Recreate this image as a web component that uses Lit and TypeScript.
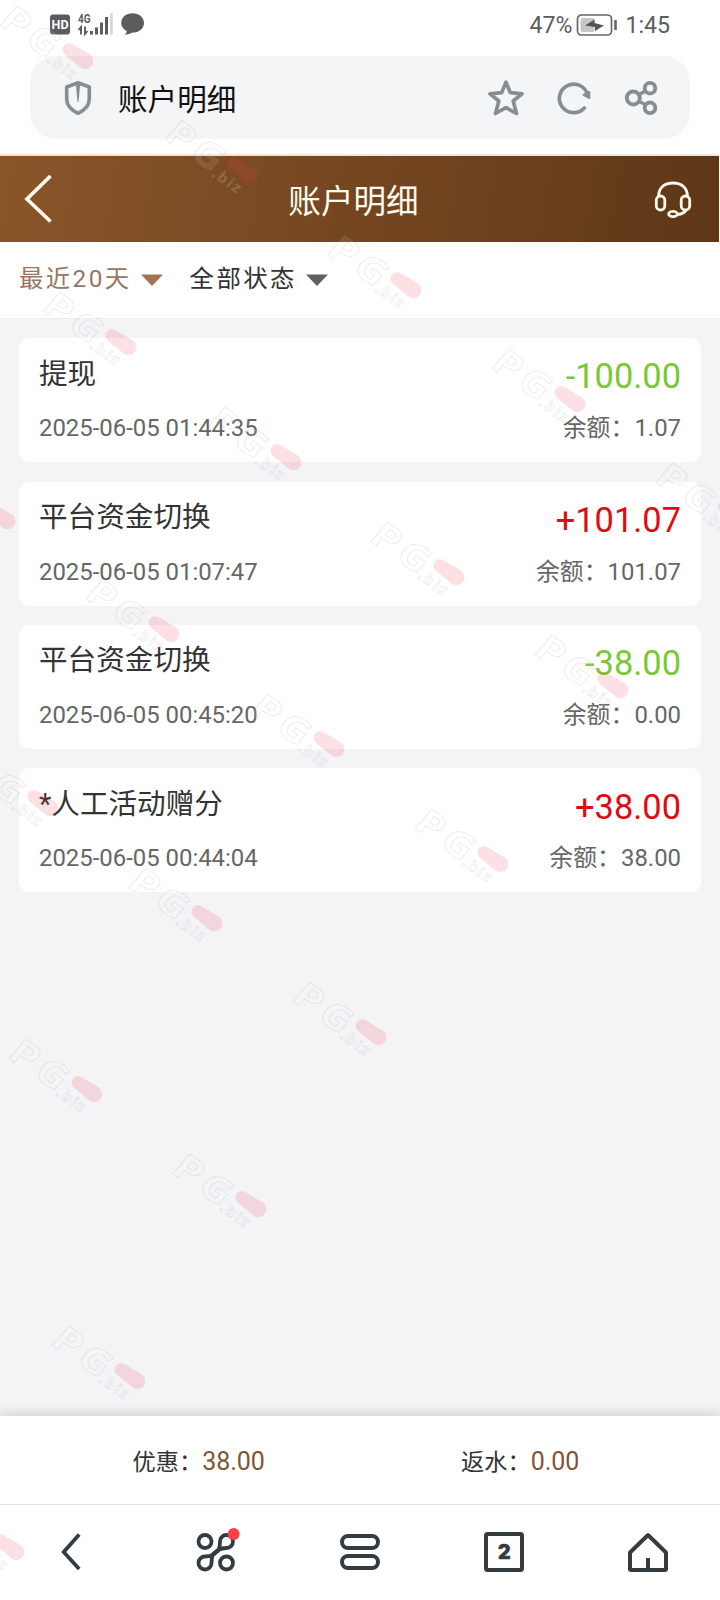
import { LitElement, html, css, svg } from "lit";
import { customElement, property } from "lit/decorators.js";
import { classMap } from "lit/directives/class-map.js";

interface Entry {
  title: string;
  time: string;
  amount: string;
  balance: string;
}

const ENTRIES: Entry[] = [
  { title: "提现", time: "2025-06-05 01:44:35", amount: "-100.00", balance: "1.07" },
  { title: "平台资金切换", time: "2025-06-05 01:07:47", amount: "+101.07", balance: "101.07" },
  { title: "平台资金切换", time: "2025-06-05 00:45:20", amount: "-38.00", balance: "0.00" },
  { title: "*人工活动赠分", time: "2025-06-05 00:44:04", amount: "+38.00", balance: "38.00" },
];

// Centre of the pill in each stamp
const STAMPS: [number, number][] = [
  [78, 56], [243, 170], [406, 285], [570, 399], [734, 513],
  [121, 342], [286, 457], [449, 572], [613, 685],
  [0, 516], [164, 629], [329, 744], [493, 859],
  [43, 803], [207, 918], [371, 1032],
  [87, 1089], [251, 1204], [130, 1376], [9, 1547],
];

@customElement("stamp-layer")
class StampLayer extends LitElement {
  static styles = css`
    :host { display: block; }
    svg { display: block; width: 100%; height: 100%; }
    .big { font: 700 36px "Open Sans", sans-serif; fill: rgba(255,255,255,.1); stroke: rgba(125,130,160,.17); stroke-width: .9; }
    .small { font: 700 15px "Open Sans", sans-serif; fill: rgba(255,255,255,.16); stroke: rgba(125,130,145,.2); stroke-width: .7; letter-spacing: 2px; }
    .pill { fill: rgba(235,60,85,.16); }
  `;
  render() {
    return html`<svg viewBox="0 0 720 1600" aria-hidden="true">
      ${STAMPS.map(([x, y]) => svg`<g transform="translate(${x} ${y}) rotate(35)">
        <g transform="skewX(-6)">
          <text class="big" x="-83" y="20" textLength="27" lengthAdjust="spacingAndGlyphs">P</text>
          <text class="big" x="-51" y="20" textLength="30" lengthAdjust="spacingAndGlyphs">G</text>
          <text class="small" x="-21" y="23">.biz</text>
        </g>
        <path class="pill" d="M-11 -6.500L9 -8A8 8 0 0 1 9 8L-11 6.500A6.500 6.500 0 0 1 -11 -6.500Z"></path>
      </g>`)}
    </svg>`;
  }
}

@customElement("record-card")
class RecordCard extends LitElement {
  @property({ attribute: false }) entry!: Entry;
  static styles = css`
    :host { display: block; }
    .card { box-sizing: border-box; height: 124px; background: #fff; border-radius: 10px; padding: 17px 20px 0; }
    .row { display: flex; justify-content: space-between; align-items: center; }
    .top { height: 40px; }
    .bottom { height: 36px; margin-top: 15px; color: #666; font-size: 23.9px; line-height: 36px; }
    .title { font-size: 28.6px; line-height: 36px; color: #333; padding-bottom: 3px; }
    .amount { font-size: 34.4px; line-height: 40px; padding-top: 2.4px; }
    .out { color: #7ac832; }
    .in { color: #e00b12; }
  `;
  render() {
    const e = this.entry;
    const out = e.amount.startsWith("-");
    return html`<div class="card">
      <div class="row top">
        <span class="title">${e.title}</span>
        <span class=${classMap({ amount: true, out, in: !out })}>${e.amount}</span>
      </div>
      <div class="row bottom"><span>${e.time}</span><span>余额：${e.balance}</span></div>
    </div>`;
  }
}

@customElement("app-root")
class AppRoot extends LitElement {
  static styles = css`
    :host { display: block; position: relative; width: 720px; height: 1600px; overflow: hidden; background: #fff; font-family: Roboto, "Noto Sans CJK SC", sans-serif; }
    .page { display: flex; flex-direction: column; height: 100%; }
    svg { display: block; flex: none; }
    .status { height: 56px; box-sizing: border-box; display: flex; align-items: center; padding: 0 50px 6px 48px; color: #5c5c5c; font-size: 23.1px; }
    .spacer { flex: 1; }
    .battery { margin: 0 7px 0 4px; }
    .hd { font: 700 13px Roboto, sans-serif; fill: #fff; }
    .net { font: 700 12px Roboto, sans-serif; fill: #5c5c5c; }
    .url { margin: 0 30px; height: 83px; border-radius: 26px; background: #f4f5f6; display: flex; align-items: center; padding: 0 28px 0 34px; }
    .url-title { font-size: 29.6px; color: #111; margin-left: 26px; flex: 1; line-height: 40px; padding-top: 5px; }
    .tools { display: flex; gap: 28px; }
    .header { margin: 15px 1px 0 0; border-top: 2px solid #ece6df; height: 86px; background: linear-gradient(100deg, #8a5529 0%, #5e3717 100%); display: grid; grid-template-columns: 100px 1fr 100px; align-items: center; color: #fffaf0; background-clip: padding-box; }
    .head-title { text-align: center; font-size: 32.6px; line-height: 44px; padding: 5px 0 0 0; margin-right: 12px; }
    .back { margin-left: 22px; }
    .service { justify-self: end; margin-right: 26px; }
    .filters { height: 76px; box-sizing: border-box; padding: 0 0 7px 19px; display: flex; align-items: center; font-size: 24.4px; letter-spacing: 2.4px; color: #333; }
    .filters svg { margin: 6px 0 0 9px; }
    .active { color: #997660; }
    .state { margin-left: 27px; }
    .list { flex: 1; background: #f4f4f6; border-top: 1px solid #ededee; padding: 19.15px 19px 0; display: flex; flex-direction: column; gap: 19.4px; }
    .totals { position: relative; height: 88px; background: #fff; box-shadow: 0 -2px 12px rgba(0,0,0,.16); display: grid; grid-template-columns: 1fr 1fr; box-sizing: border-box; padding: 0 39px 0 38px; align-items: center; text-align: center; font-size: 23.2px; color: #333; }
    .sum { color: #7f5536; font-size: 25px; }
    .nav { position: relative; box-sizing: border-box; height: 96px; border-top: 1px solid #dcdedf; background: #fff; display: grid; grid-template-columns: repeat(5, 1fr); justify-items: center; align-items: center; padding-bottom: 1px; }
    .count { font: 900 19.5px Inter, sans-serif; fill: #343c41; stroke: #343c41; stroke-width: .4; text-anchor: middle; }
    .stamps { position: absolute; inset: 0; pointer-events: none; }
  `;

  private caret(color: string) {
    return html`<svg width="22" height="12" viewBox="0 0 22 12"><path d="M0 0.500H22L11 12Z" fill=${color} /></svg>`;
  }

  private status() {
    return html`<div class="status">
      <svg width="98" height="28" viewBox="0 0 98 28">
        <rect x="2" y="3.5" width="20" height="20" rx="3" fill="#5c5c5c" />
        <text class="hd" x="3.6" y="18.2" textLength="17" lengthAdjust="spacingAndGlyphs">HD</text>
        <text class="net" x="30" y="11.5" textLength="12.5" lengthAdjust="spacingAndGlyphs">4G</text>
        <path d="M30.500 19L33 16V23.500M37 15.500V23L39.500 20" fill="none" stroke="#5c5c5c" stroke-width="1.900" />
        <path d="M43.500 20V23.500M48.500 16.500V23.500M53.500 11.500V23.500M58.500 6V23.500" stroke="#5c5c5c" stroke-width="3" />
        <path d="M63.500 2V23.500" stroke="#d5d5d5" stroke-width="2.600" />
        <path d="M84.500 2.300C91 2.300 96 6.400 96 12S91 21.600 84.500 21.600C81.800 22.900 79.600 23.800 77 23.800C78 22.500 78.700 21.300 78.700 20C75.300 18.100 73.200 15.300 73.200 12C73.200 6.400 78.100 2.300 84.500 2.300Z" fill="#5c5c5c" />
      </svg>
      <span class="spacer"></span>
      <span>47%</span>
      <svg class="battery" width="42" height="22" viewBox="0 0 42 22">
        <rect x="1.500" y="1" width="34" height="20" rx="4" fill="none" stroke="#666" stroke-width="1.700" />
        <rect x="4.500" y="4" width="14" height="14" rx="2" fill="#c6c6c6" />
        <path d="M9 11.500L18.500 5.500V9L28 11.500L19 17V13Z" fill="#555" />
        <path d="M39.500 6V16" stroke="#666" stroke-width="2.600" />
      </svg>
      <span>1:45</span>
    </div>`;
  }

  private urlBar() {
    return html`<div class="url">
      <svg width="28" height="36" viewBox="0 0 28 36">
        <path d="M14 2.800L25.300 7V19C25.300 26 20 30.500 14 33.300C8 30.500 2.700 26 2.700 19V7Z" fill="none" stroke="#868e93" stroke-width="3.600" stroke-linejoin="round" />
        <path d="M11.800 4H16.200L14.500 22H13.500Z" fill="#868e93" />
      </svg>
      <span class="url-title">账户明细</span>
      <div class="tools">
        <svg width="40" height="40" viewBox="0 0 40 40"><path d="M20 4.200L24.300 14.600L36 15.800L27.200 23L30.500 35.500L20 29.700L9.500 35.500L12.800 23L4 15.800L15.700 14.600Z" fill="none" stroke="#868e93" stroke-width="3.700" stroke-linejoin="round" /></svg>
        <svg width="40" height="40" viewBox="0 0 40 40"><path d="M30.300 30A14.300 14.300 0 1 1 33.300 16" fill="none" stroke="#868e93" stroke-width="3.700" stroke-linecap="round" /><path d="M29.500 16.800L35.300 14V20Z" fill="#868e93" stroke="#868e93" stroke-width="2" stroke-linejoin="round" /></svg>
        <svg width="40" height="40" viewBox="0 0 40 40"><path d="M16 17L24.500 12.500M16 23L24.500 27" stroke="#868e93" stroke-width="3.500" /><g fill="none" stroke="#868e93" stroke-width="3.900"><circle cx="11.300" cy="20" r="6.500" /><circle cx="28" cy="10.200" r="5.300" /><circle cx="28" cy="29.800" r="5.300" /></g></svg>
      </div>
    </div>`;
  }

  private nav() {
    return html`<div class="nav">
      <svg width="48" height="48" viewBox="0 0 48 48"><path d="M31.200 6.500L15.700 24L31.200 41" fill="none" stroke="#343c41" stroke-width="3.800" /></svg>
      <svg width="48" height="48" viewBox="0 0 48 48">
        <g fill="none" stroke="#343c41" stroke-width="3.800" stroke-linejoin="round">
          <circle cx="13" cy="13.500" r="6.500" /><circle cx="34.500" cy="35" r="6.500" />
          <path d="M26.500 22C28 19 28 16 28 13.500A6.500 6.500 0 1 1 34.500 20C31.500 20 29 20.300 26.500 22Z" />
          <path d="M21 26.500C19.500 29.500 19.500 32.500 19.500 35A6.500 6.500 0 1 1 13 28.500C16 28.500 18.500 28.200 21 26.500Z" />
          <path d="M26.500 22L21 26.500" stroke-width="4.600" />
        </g>
        <circle cx="41.700" cy="6" r="6" fill="#fb4145" />
      </svg>
      <svg width="48" height="48" viewBox="0 0 48 48"><g fill="none" stroke="#343c41" stroke-width="4"><rect x="6" y="8" width="36" height="12" rx="6" /><rect x="6" y="28" width="36" height="12" rx="6" /></g></svg>
      <svg width="48" height="48" viewBox="0 0 48 48"><rect x="6" y="6" width="36" height="36" rx="1.500" fill="none" stroke="#343c41" stroke-width="4" /><text class="count" x="24.300" y="31">2</text></svg>
      <svg width="48" height="48" viewBox="0 0 48 48"><path d="M24 7L42 24.500V41Q42 42 41 42H7Q6 42 6 41V24.500ZM24 42V30" fill="none" stroke="#343c41" stroke-width="4" stroke-linejoin="round" /></svg>
    </div>`;
  }

  render() {
    return html`
      <div class="page">
        ${this.status()}
        ${this.urlBar()}
        <div class="header">
          <svg class="back" width="32" height="50" viewBox="0 0 32 50"><path d="M28.500 2L5 25L28.500 47.500" fill="none" stroke="#fff8ee" stroke-width="3.700" /></svg>
          <div class="head-title">账户明细</div>
          <svg class="service" width="40" height="40" viewBox="0 0 40 40"><g fill="none" stroke="#fff8ee" stroke-width="2.800"><path d="M5.500 17C6 8.500 11.500 4 20 4S34 8.500 34.500 17" /><rect x="3.300" y="17" width="8.500" height="14" rx="4.250" /><rect x="28.200" y="17" width="8.500" height="14" rx="4.250" /><ellipse cx="20" cy="35" rx="4.400" ry="2.700" /><path d="M24.500 35.500Q31 35 33.500 30.500" /></g></svg>
        </div>
        <div class="filters">
          <span class="active">最近20天</span>${this.caret("#a57353")}
          <span class="state">全部状态</span>${this.caret("#606060")}
        </div>
        <div class="list">${ENTRIES.map((e) => html`<record-card .entry=${e}></record-card>`)}</div>
        <div class="totals">
          <div>优惠：<span class="sum">38.00</span></div>
          <div>返水：<span class="sum">0.00</span></div>
        </div>
        ${this.nav()}
      </div>
      <stamp-layer class="stamps"></stamp-layer>
    `;
  }
}
